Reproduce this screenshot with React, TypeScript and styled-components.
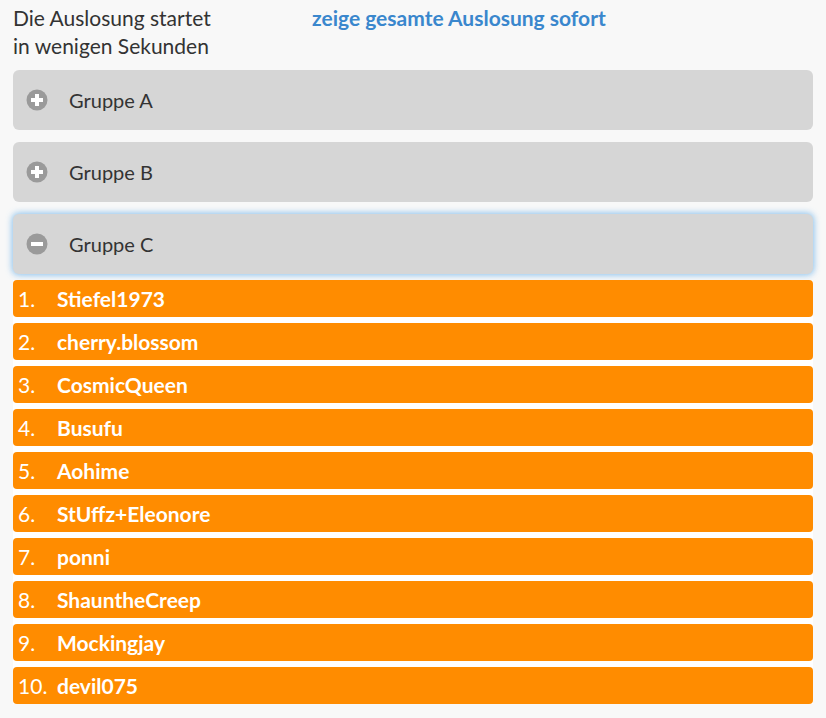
import React, { FC } from 'react';
import styled, { createGlobalStyle } from 'styled-components';

const GlobalStyle = createGlobalStyle`
  * {
    box-sizing: border-box;
  }
  body {
    margin: 0;
    background-color: #f8f8f8;
    font-family: Lato, "Open Sans", sans-serif;
    color: #333;
  }
`;

const Page = styled.div`
  padding: 4px 13px 14px 13px;
  width: 826px;
`;

const Header = styled.div`
  display: flex;
  align-items: flex-start;
  font-size: 21px;
  line-height: 28px;
  margin-bottom: 10px;
`;

const Intro = styled.div`
  width: 299px;
`;

const RevealLink = styled.a`
  color: #3a87cd;
  font-weight: 700;
  text-decoration: none;
  cursor: pointer;
`;

const Groups = styled.div`
  display: flex;
  flex-direction: column;
  gap: 12px;
`;

const GroupPanel = styled.div<{ open?: boolean }>`
  display: flex;
  align-items: center;
  height: 60px;
  padding-left: 13px;
  gap: 21px;
  background-color: #d6d6d6;
  border-radius: 6px;
  font-size: 20px;
  color: #333;
  box-shadow: ${({ open }) => (open ? '0 0 6px 1px rgba(102, 175, 233, 0.75)' : 'none')};
`;

const ToggleIcon: FC<{ open?: boolean }> = ({ open }) => (
  <svg width="22" height="22" viewBox="0 0 22 22">
    <circle cx="11" cy="11" r="10.5" fill="#9a9a9a" />
    {open ? (
      <rect x="5" y="9" width="12" height="4" fill="#fff" />
    ) : (
      <path d="M9 5h4v4h4v4h-4v4H9v-4H5V9h4z" fill="#fff" />
    )}
  </svg>
);

const List = styled.ol`
  list-style: none;
  margin: 6px 0 0 0;
  padding: 0;
  background-color: #fff;
  display: flex;
  flex-direction: column;
  gap: 6px;
`;

const Row = styled.li`
  display: flex;
  align-items: center;
  height: 37px;
  padding-left: 5px;
  background-color: #ff8c00;
  border-radius: 4px;
  color: #fff;
  font-size: 21px;
`;

const Rank = styled.span`
  width: 39px;
`;

const Name = styled.span`
  font-weight: 700;
`;

const players = [
  'Stiefel1973',
  'cherry.blossom',
  'CosmicQueen',
  'Busufu',
  'Aohime',
  'StUffz+Eleonore',
  'ponni',
  'ShauntheCreep',
  'Mockingjay',
  'devil075',
];

const App: FC = () => {
  return (
    <Page>
      <GlobalStyle />
      <Header>
        <Intro>
          Die Auslosung startet
          <br />
          in wenigen Sekunden
        </Intro>
        <RevealLink>zeige gesamte Auslosung sofort</RevealLink>
      </Header>
      <Groups>
        <GroupPanel>
          <ToggleIcon />
          Gruppe A
        </GroupPanel>
        <GroupPanel>
          <ToggleIcon />
          Gruppe B
        </GroupPanel>
        <GroupPanel open>
          <ToggleIcon open />
          Gruppe C
        </GroupPanel>
      </Groups>
      <List>
        {players.map((name, i) => (
          <Row key={name}>
            <Rank>{i + 1}.</Rank>
            <Name>{name}</Name>
          </Row>
        ))}
      </List>
    </Page>
  );
};

export default App;
